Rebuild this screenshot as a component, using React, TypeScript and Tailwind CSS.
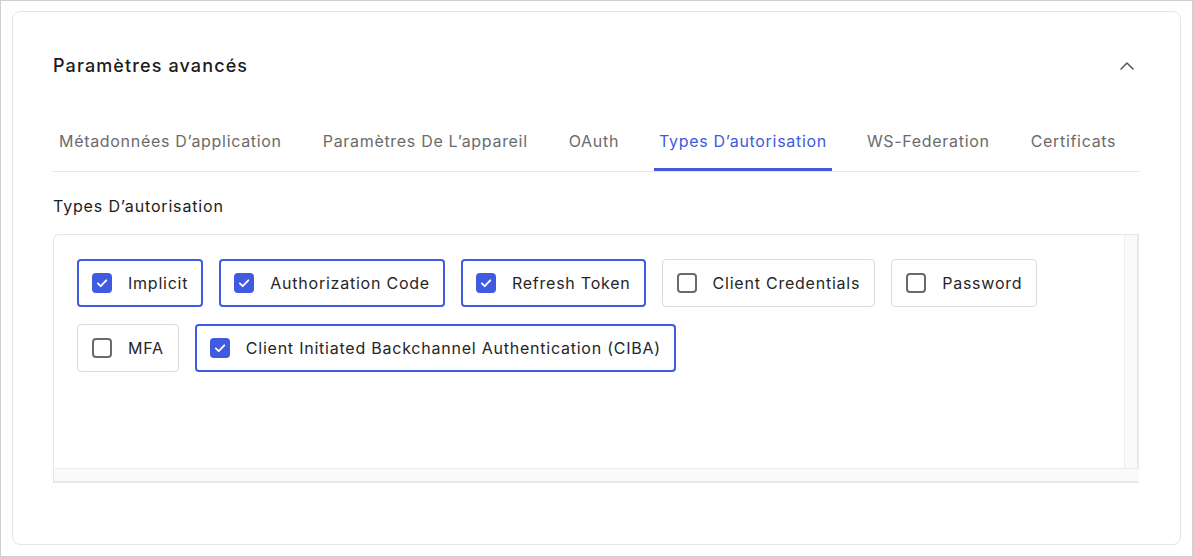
import React from "react";
import { ChevronUp } from "lucide-react";

const tabs = [
  "Métadonnées D’application",
  "Paramètres De L’appareil",
  "OAuth",
  "Types D’autorisation",
  "WS-Federation",
  "Certificats",
];

const grants = [
  { label: "Implicit", checked: true },
  { label: "Authorization Code", checked: true },
  { label: "Refresh Token", checked: true },
  { label: "Client Credentials", checked: false },
  { label: "Password", checked: false },
  { label: "MFA", checked: false },
  { label: "Client Initiated Backchannel Authentication (CIBA)", checked: true },
];

function Box({ checked }: { checked: boolean }) {
  if (!checked) {
    return <span className="block h-5 w-5 rounded-[4px] border-2 border-[#6a6a6a] bg-white" />;
  }
  return (
    <svg width="20" height="20" viewBox="0 0 20 20" className="block">
      <rect x="0" y="0" width="20" height="20" rx="4" fill="#405ae0" />
      <path d="M5.8 10.4l2.9 2.8 5.6-5.9" fill="none" stroke="#fff" strokeWidth="1.8" strokeLinecap="round" strokeLinejoin="round" />
    </svg>
  );
}

function Grant({ label, checked }: { label: string; checked: boolean }) {
  return (
    <label
      className={
        checked
          ? "flex h-12 items-center gap-4 rounded-[4px] border-2 border-[#405ae0] px-[13px] text-base tracking-[0.048em] text-[#262626]"
          : "flex h-12 items-center gap-4 rounded-[4px] border border-[#dcdcdc] px-[14px] text-base tracking-[0.048em] text-[#262626]"
      }
    >
      <Box checked={checked} />
      <span className="whitespace-nowrap">{label}</span>
    </label>
  );
}

export default function App() {
  const active = 3;
  return (
    <div
      className="h-[557px] w-[1193px] border border-[#cfcfcf] bg-white px-[11px] pt-[10px] tracking-[0.043em]"
      style={{ fontFamily: "Inter, 'Noto Sans', sans-serif" }}
    >
      <div className="h-[534px] rounded-lg border border-[#e6e6e6] pl-10 pr-[41px] pt-10">
        {/* header */}
        <div className="flex items-center justify-between">
          <h2 className="text-lg leading-7 font-medium tracking-[0.062em] text-[#1c1c1c]">Paramètres avancés</h2>
          <ChevronUp size={24} strokeWidth={1.5} color="#555" />
        </div>

        {/* tabs */}
        <div className="mt-10 flex gap-[29px] border-b border-[#e8e8e8]">
          {tabs.map((t, i) => (
            <div
              key={t}
              className={
                i === active
                  ? "border-b-[3px] border-[#405ae0] px-[5px] pt-[9px] pb-[15px] text-base leading-6 text-[#405ae0]"
                  : "border-b-[3px] border-transparent px-[6px] pt-[9px] pb-[15px] text-base leading-6 text-[#6b6b6b]"
              }
            >
              {t}
            </div>
          ))}
        </div>

        <div className="mt-[22px] text-base leading-6 font-normal tracking-[0.052em] text-[#1c1c1c]">Types D’autorisation</div>

        {/* grant list panel with scrollbars */}
        <div className="mt-4 flex h-[249px] flex-col rounded-tl-md border-t border-l border-[#e6e6e6]">
          <div className="flex flex-1">
            <div className="flex flex-1 flex-wrap content-start gap-x-4 gap-y-[17px] pl-[23px] pt-6 pr-6">
              {grants.map((g) => (
                <Grant key={g.label} {...g} />
              ))}
            </div>
            <div className="w-[15px] border-l border-r-2 border-[#e8e8e8] border-l-[#ececec] bg-[#fafafa]" />
          </div>
          <div className="h-[15px] border-t border-b-2 border-[#e8e8e8] border-t-[#ececec] bg-[#fafafa]" />
        </div>
      </div>
    </div>
  );
}
